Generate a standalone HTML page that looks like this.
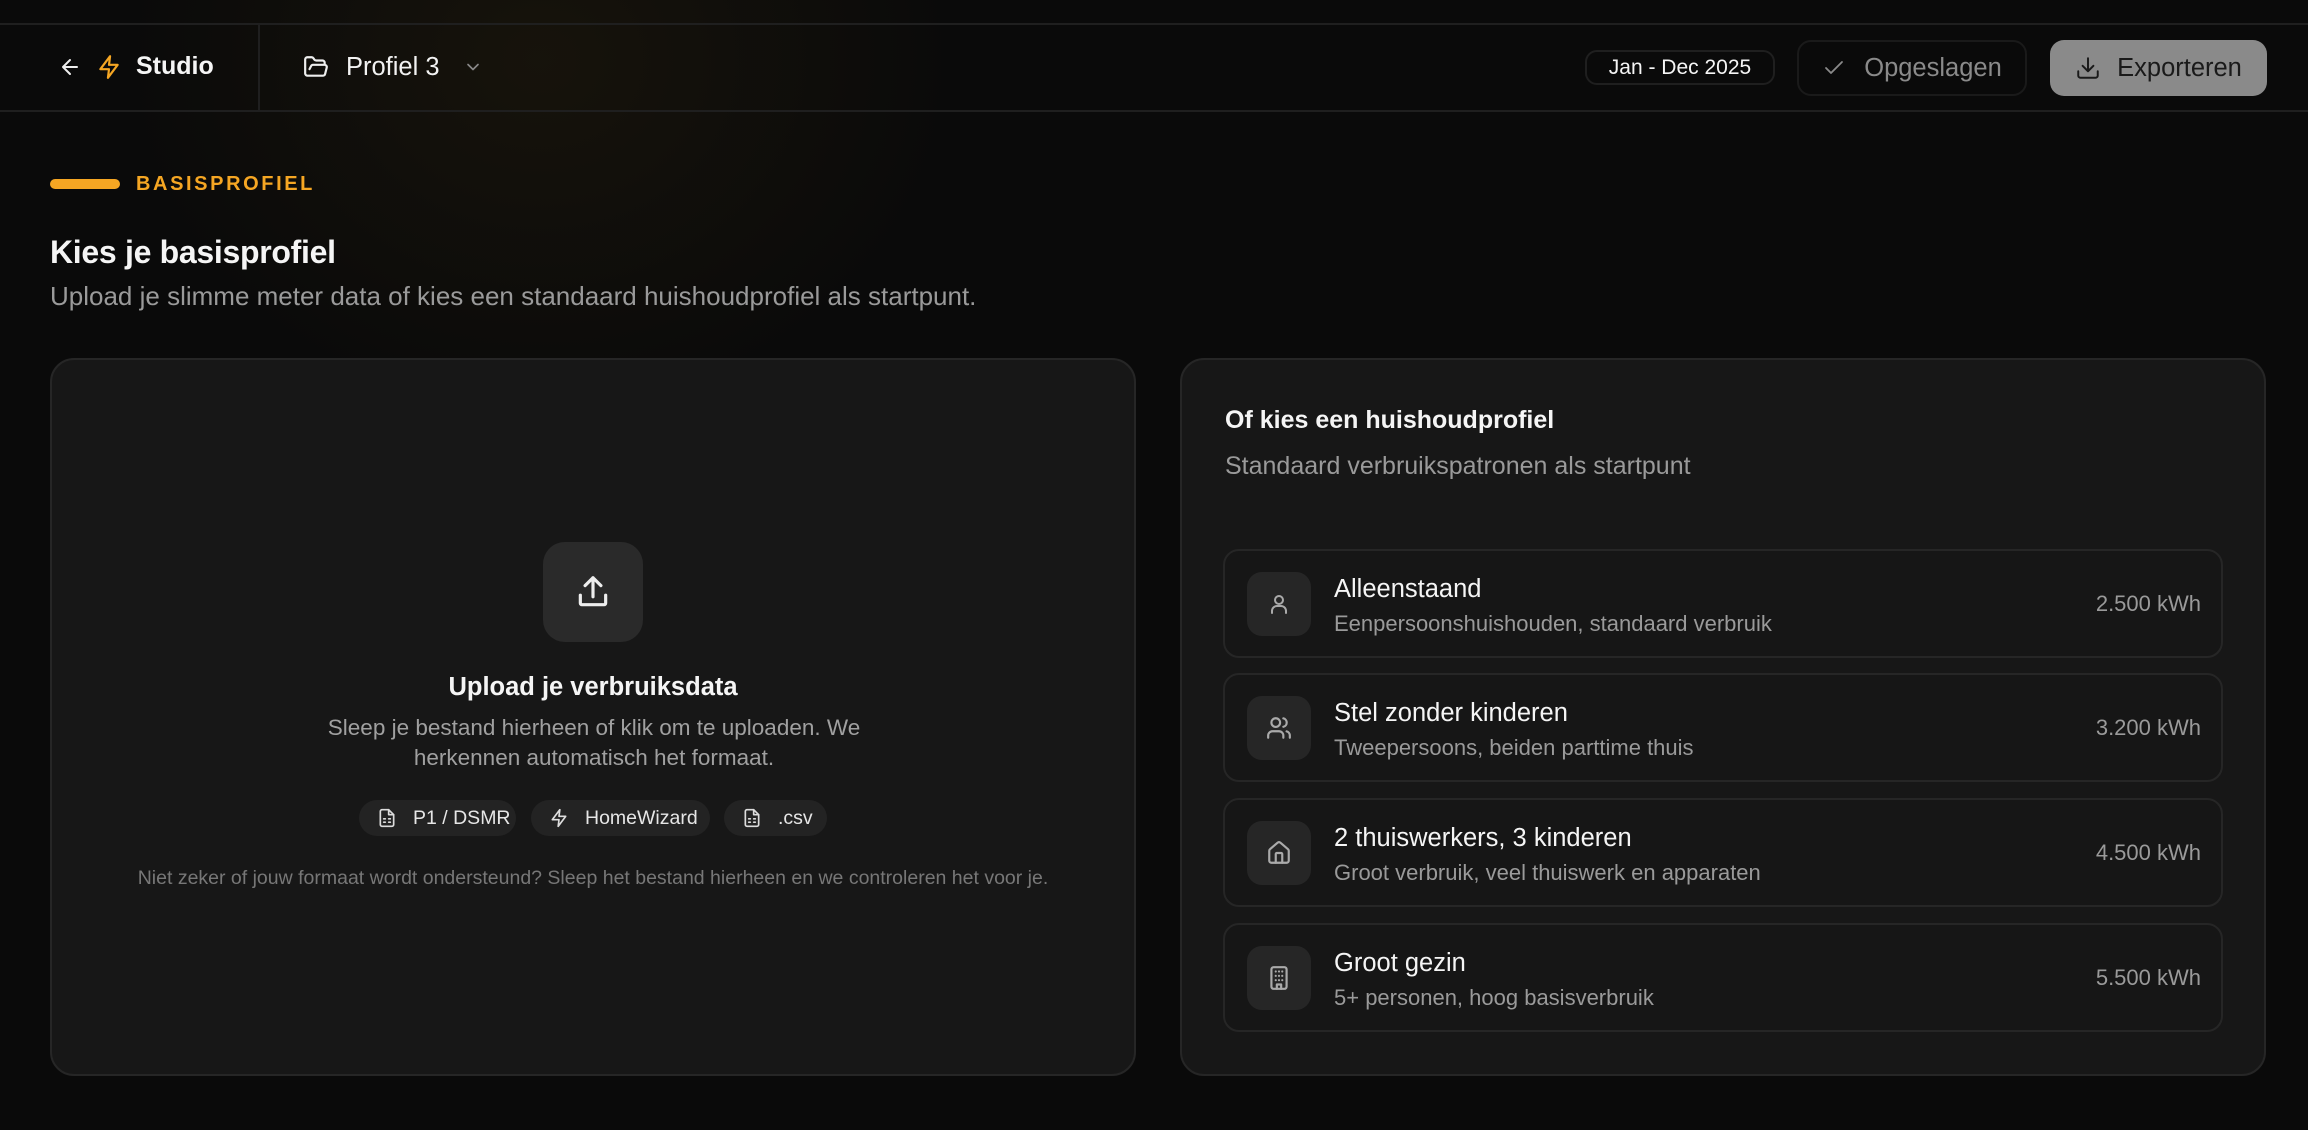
<!DOCTYPE html>
<html><head><meta charset="utf-8"><style>
*{box-sizing:border-box;margin:0;padding:0}
html,body{width:2308px;height:1130px;overflow:hidden}
body{background:#0a0a0a;font-family:"Liberation Sans",sans-serif;color:#f2f2f2;position:relative}
.glow{position:absolute;left:0;top:0;width:1100px;height:420px;background:radial-gradient(ellipse 420px 360px at 540px 60px,rgba(55,42,15,0.28),rgba(20,16,8,0) 100%);pointer-events:none}
.abs{position:absolute}
.hline{position:absolute;left:0;width:2308px;height:2px;background:#1f1f1f}
svg{display:block}
.pill{position:absolute;display:flex;align-items:center;justify-content:center;border-radius:14px}
.card{position:absolute;top:358px;height:718px;width:1086px;background:#171717;border:2px solid #262626;border-radius:24px}
.chip{position:absolute;top:800px;height:36px;background:#232323;border-radius:18px;display:flex;align-items:center;font-size:19.5px;color:#e6e6e6;padding-left:18px;gap:16px}
.row{position:absolute;left:1223px;width:1000px;height:109px;border:2px solid #262626;border-radius:16px;background:#161616}
.ibox{position:absolute;left:22px;top:21px;width:64px;height:64px;border-radius:15px;background:#262626;display:flex;align-items:center;justify-content:center}
.rt{position:absolute;left:109px;top:24px;font-size:25.5px;color:#f5f5f5}
.rs{position:absolute;left:109px;top:60px;font-size:22px;color:#9a9a9a}
.kwh{position:absolute;right:20px;top:40px;font-size:22px;color:#9a9a9a}
</style></head><body>
<div class="glow"></div>
<div class="hline" style="top:23px"></div>
<div class="hline" style="top:110px"></div>
<div class="abs" style="left:258px;top:24px;width:2px;height:86px;background:#1f1f1f"></div>

<svg class="abs" style="left:58px;top:55px" width="24" height="24" viewBox="0 0 24 24" fill="none" stroke="#eee" stroke-width="2" stroke-linecap="round" stroke-linejoin="round"><path d="M19 12H5M12 19l-7-7 7-7"/></svg>
<svg class="abs" style="left:96px;top:54px" width="26" height="26" viewBox="0 0 24 24" fill="none" stroke="#f5a623" stroke-width="2" stroke-linecap="round" stroke-linejoin="round"><path d="M13 2L4 14h8l-1 8 9-12h-8l1-8z"/></svg>
<div class="abs" style="left:136px;top:52px;font-size:25px;font-weight:bold;color:#f5f5f5">Studio</div>

<svg class="abs" style="left:302px;top:54px" width="28" height="26" viewBox="0 0 24 24" fill="none" stroke="#eee" stroke-width="2" stroke-linecap="round" stroke-linejoin="round"><path d="M6 14l1.5-2.9A2 2 0 0 1 9.2 10H20a2 2 0 0 1 1.9 2.5l-1.5 6A2 2 0 0 1 18.5 20H4a2 2 0 0 1-2-2V5a2 2 0 0 1 2-2h3.9a2 2 0 0 1 1.7.9l.8 1.2a2 2 0 0 0 1.7.9H18a2 2 0 0 1 2 2v2"/></svg>
<div class="abs" style="left:346px;top:53px;font-size:25.5px;color:#f2f2f2">Profiel 3</div>
<svg class="abs" style="left:462px;top:57px" width="22" height="20" viewBox="0 0 24 24" fill="none" stroke="#888" stroke-width="2" stroke-linecap="round" stroke-linejoin="round"><path d="M6 9l6 6 6-6"/></svg>

<div class="pill" style="left:1585px;top:50px;width:190px;height:35px;border:2px solid #1f1f1f;border-radius:12px;font-size:21px;color:#f5f5f5">Jan - Dec 2025</div>
<div class="pill" style="left:1797px;top:40px;width:230px;height:56px;border:2px solid #1a1a1a;gap:18px;font-size:25.5px;color:#8a8a8a"><svg width="24" height="24" viewBox="0 0 24 24" fill="none" stroke="#8a8a8a" stroke-width="1.8" stroke-linecap="round" stroke-linejoin="round"><path d="M20 6L9 17l-5-5"/></svg>Opgeslagen</div>
<div class="pill" style="left:2050px;top:40px;width:217px;height:56px;background:#8a8a8a;gap:16px;font-size:25.5px;color:#1a1a1a"><svg width="26" height="26" viewBox="0 0 24 24" fill="none" stroke="#1a1a1a" stroke-width="1.8" stroke-linecap="round" stroke-linejoin="round"><path d="M21 15v4a2 2 0 0 1-2 2H5a2 2 0 0 1-2-2v-4M7 10l5 5 5-5M12 15V3"/></svg>Exporteren</div>

<div class="abs" style="left:50px;top:179px;width:70px;height:10px;border-radius:5px;background:#f5a623"></div>
<div class="abs" style="left:136px;top:173px;font-size:20px;font-weight:bold;letter-spacing:2.6px;color:#f5a623">BASISPROFIEL</div>
<div class="abs" style="left:50px;top:234px;font-size:32px;font-weight:bold;color:#f5f5f5;letter-spacing:-0.3px">Kies je basisprofiel</div>
<div class="abs" style="left:50px;top:281px;font-size:26px;color:#9a9a9a">Upload je slimme meter data of kies een standaard huishoudprofiel als startpunt.</div>

<div class="card" style="left:50px"></div>
<div class="card" style="left:1180px"></div>

<div class="abs" style="left:543px;top:542px;width:100px;height:100px;border-radius:22px;background:#2a2a2a;display:flex;align-items:center;justify-content:center"><svg width="38" height="38" viewBox="0 0 24 24" fill="none" stroke="#eee" stroke-width="2" stroke-linecap="round" stroke-linejoin="round"><path d="M4 14v5a1 1 0 0 0 1 1h14a1 1 0 0 0 1-1v-5M12 15V3M7 8l5-5 5 5"/></svg></div>
<div class="abs" style="left:50px;width:1086px;top:673px;text-align:center;font-size:25.5px;font-weight:bold;color:#f5f5f5">Upload je verbruiksdata</div>
<div class="abs" style="left:300px;width:588px;top:713px;text-align:center;font-size:22.5px;line-height:30px;color:#a0a0a0">Sleep je bestand hierheen of klik om te uploaden. We herkennen automatisch het formaat.</div>

<div class="chip" style="left:359px;width:157px"><svg width="20" height="22" viewBox="0 0 24 24" fill="none" stroke="#ddd" stroke-width="2" stroke-linecap="round" stroke-linejoin="round"><path d="M14 2H6a2 2 0 0 0-2 2v16a2 2 0 0 0 2 2h12a2 2 0 0 0 2-2V8z"/><path d="M14 2v6h6M8 13h2M14 13h2M8 17h2M14 17h2"/></svg>P1 / DSMR</div>
<div class="chip" style="left:531px;width:179px"><svg width="20" height="22" viewBox="0 0 24 24" fill="none" stroke="#ddd" stroke-width="2" stroke-linecap="round" stroke-linejoin="round"><path d="M13 2L4 14h8l-1 8 9-12h-8l1-8z"/></svg>HomeWizard</div>
<div class="chip" style="left:724px;width:103px"><svg width="20" height="22" viewBox="0 0 24 24" fill="none" stroke="#ddd" stroke-width="2" stroke-linecap="round" stroke-linejoin="round"><path d="M14 2H6a2 2 0 0 0-2 2v16a2 2 0 0 0 2 2h12a2 2 0 0 0 2-2V8z"/><path d="M14 2v6h6M8 13h2M14 13h2M8 17h2M14 17h2"/></svg>.csv</div>
<div class="abs" style="left:50px;width:1086px;top:867px;text-align:center;font-size:19.5px;color:#777">Niet zeker of jouw formaat wordt ondersteund? Sleep het bestand hierheen en we controleren het voor je.</div>

<div class="abs" style="left:1225px;top:406px;font-size:25px;font-weight:bold;color:#f5f5f5">Of kies een huishoudprofiel</div>
<div class="abs" style="left:1225px;top:452px;font-size:25px;color:#9a9a9a">Standaard verbruikspatronen als startpunt</div>

<div class="row" style="top:549px"><div class="ibox"><svg width="24" height="24" viewBox="0 0 24 24" fill="none" stroke="#aaa" stroke-width="2" stroke-linecap="round" stroke-linejoin="round"><circle cx="12" cy="8" r="4"/><path d="M5 21v-2a5 5 0 0 1 5-5h4a5 5 0 0 1 5 5v2"/></svg></div><div class="rt">Alleenstaand</div><div class="rs">Eenpersoonshuishouden, standaard verbruik</div><div class="kwh">2.500 kWh</div></div>
<div class="row" style="top:673px"><div class="ibox"><svg width="26" height="26" viewBox="0 0 24 24" fill="none" stroke="#aaa" stroke-width="2" stroke-linecap="round" stroke-linejoin="round"><circle cx="9" cy="7" r="4"/><path d="M2 21v-2a4 4 0 0 1 4-4h6a4 4 0 0 1 4 4v2M16 3.1a4 4 0 0 1 0 7.8M22 21v-2a4 4 0 0 0-3-3.9"/></svg></div><div class="rt">Stel zonder kinderen</div><div class="rs">Tweepersoons, beiden parttime thuis</div><div class="kwh">3.200 kWh</div></div>
<div class="row" style="top:798px"><div class="ibox"><svg width="26" height="26" viewBox="0 0 24 24" fill="none" stroke="#aaa" stroke-width="2" stroke-linecap="round" stroke-linejoin="round"><path d="M15 21v-8a1 1 0 0 0-1-1h-4a1 1 0 0 0-1 1v8"/><path d="M3 10a2 2 0 0 1 .7-1.5l7-6a2 2 0 0 1 2.6 0l7 6A2 2 0 0 1 21 10v9a2 2 0 0 1-2 2H5a2 2 0 0 1-2-2z"/></svg></div><div class="rt">2 thuiswerkers, 3 kinderen</div><div class="rs">Groot verbruik, veel thuiswerk en apparaten</div><div class="kwh">4.500 kWh</div></div>
<div class="row" style="top:923px"><div class="ibox"><svg width="26" height="26" viewBox="0 0 24 24" fill="none" stroke="#aaa" stroke-width="2" stroke-linecap="round" stroke-linejoin="round"><rect x="5" y="2" width="14" height="20" rx="2"/><path d="M10 22v-4h4v4M9 6h.01M12 6h.01M15 6h.01M9 10h.01M12 10h.01M15 10h.01M9 14h.01M12 14h.01M15 14h.01"/></svg></div><div class="rt">Groot gezin</div><div class="rs">5+ personen, hoog basisverbruik</div><div class="kwh">5.500 kWh</div></div>
</body></html>
